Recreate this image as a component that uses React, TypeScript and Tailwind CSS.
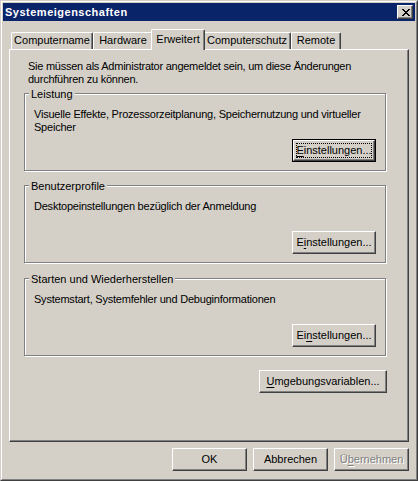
import type { ReactNode } from 'react'

const tabs = [
  { label: 'Computername', w: 'w-[82px]' },
  { label: 'Hardware', w: 'w-[60px]' },
  { label: 'Erweitert', w: 'w-[54px]', active: true },
  { label: 'Computerschutz', w: 'w-[88px]' },
  { label: 'Remote', w: 'w-[50px]' },
]

function Mn({ children }: { children: ReactNode }) {
  return <span className="underline underline-offset-[2px]">{children}</span>
}

function Button({
  children,
  className = 'w-[75px]',
  isDefault,
  disabled,
}: {
  children: ReactNode
  className?: string
  isDefault?: boolean
  disabled?: boolean
}) {
  if (isDefault) {
    return (
      <div className={`h-[23px] border border-black ${className}`}>
        <div className="relative flex h-full items-center justify-center border border-t-white border-l-white border-r-[#404040] border-b-[#404040] bg-[#D4D0C8] shadow-[inset_-1px_-1px_0_#808080]">
          <span className="absolute inset-[2px] border border-dotted border-black" />
          <span className="relative">{children}</span>
        </div>
      </div>
    )
  }
  return (
    <div
      className={`flex h-[23px] items-center justify-center border border-t-white border-l-white border-r-[#404040] border-b-[#404040] bg-[#D4D0C8] shadow-[inset_-1px_-1px_0_#808080] ${className} ${
        disabled ? 'text-[#808080] [text-shadow:1px_1px_0_#fff]' : ''
      }`}
    >
      {children}
    </div>
  )
}

function Group({
  label,
  className,
  children,
  button,
}: {
  label: string
  className: string
  children: ReactNode
  button: ReactNode
}) {
  return (
    <div
      className={`relative flex h-[78px] w-[362px] flex-col border border-[#808080] pt-[14px] pr-[9px] pb-[8px] pl-[9px] shadow-[inset_1px_1px_0_#fff,1px_1px_0_#fff] ${className}`}
    >
      <span className="absolute top-[-6px] left-[4px] bg-[#D4D0C8] px-[2px]">{label}</span>
      <div className="whitespace-nowrap tracking-[-0.22px]">{children}</div>
      <div className="mt-auto self-end">{button}</div>
    </div>
  )
}

function CloseGlyph() {
  const rows = ['11000011', '01100110', '00111100', '00011000', '00111100', '01100110', '11000011']
  return (
    <svg width="8" height="7" viewBox="0 0 8 7" shapeRendering="crispEdges">
      {rows.map((r, y) =>
        r.split('').map((c, x) => (c === '1' ? <rect key={`${x}-${y}`} x={x} y={y} width="1" height="1" fill="#000" /> : null))
      )}
    </svg>
  )
}

export default function App() {
  return (
    <div className="h-[481px] w-[418px] border border-t-[#D4D0C8] border-l-[#D4D0C8] border-r-[#404040] border-b-[#404040] bg-[#D4D0C8] font-['Liberation_Sans',Arial,sans-serif] text-[11px] leading-[13px] text-black">
      <div className="h-full border border-t-white border-l-white border-r-[#808080] border-b-[#808080] p-[1px]">
        {/* title bar */}
        <div className="flex h-[18px] items-center justify-between bg-[#0A246A] pl-[2px]">
          <span className="font-bold tracking-[0.5px] text-white">Systemeigenschaften</span>
          <div className="mr-[2px] flex h-[14px] w-[16px] items-center justify-center border border-t-white border-l-white border-r-[#404040] border-b-[#404040] bg-[#D4D0C8] pl-[1px] shadow-[inset_-1px_-1px_0_#808080]">
            <CloseGlyph />
          </div>
        </div>

        {/* tabs */}
        <div className="mt-[8px] flex h-[20px] items-end pl-[8px]">
          {tabs.map((t) =>
            t.active ? (
              <div
                key={t.label}
                className={`relative z-10 -mx-[2px] -mb-[1px] h-[21px] rounded-t-[2px] border-t border-l border-r border-t-white border-l-white border-r-[#404040] bg-[#D4D0C8] pt-[3px] text-center shadow-[inset_-1px_0_0_#808080] ${t.w}`}
              >
                {t.label}
              </div>
            ) : (
              <div
                key={t.label}
                className={`h-[17px] rounded-t-[2px] border-t border-l border-r border-t-white border-l-white border-r-[#404040] pt-[1px] text-center shadow-[inset_-1px_0_0_#808080] ${t.w}`}
              >
                {t.label}
              </div>
            )
          )}
        </div>

        {/* panel */}
        <div className="ml-[6px] h-[393px] w-[400px] border border-t-white border-l-white border-r-[#404040] border-b-[#404040] pt-[10px] pl-[14px] shadow-[inset_-1px_-1px_0_#808080]">
          <p className="pl-[4px] whitespace-nowrap tracking-[-0.25px]">
            Sie müssen als Administrator angemeldet sein, um diese Änderungen
            <br />
            durchführen zu können.
          </p>

          <Group
            label="Leistung"
            className="mt-[7px]"
            button={
              <Button isDefault className="w-[84px]">
                <Mn>E</Mn>instellungen...
              </Button>
            }
          >
            Visuelle Effekte, Prozessorzeitplanung, Speichernutzung und virtueller
            <br />
            Speicher
          </Group>

          <Group
            label="Benutzerprofile"
            className="mt-[14px]"
            button={
              <Button className="w-[84px]">
                E<Mn>i</Mn>nstellungen...
              </Button>
            }
          >
            Desktopeinstellungen bezüglich der Anmeldung
          </Group>

          <Group
            label="Starten und Wiederherstellen"
            className="mt-[15px]"
            button={
              <Button className="w-[84px]">
                Ei<Mn>n</Mn>stellungen...
              </Button>
            }
          >
            Systemstart, Systemfehler und Debuginformationen
          </Group>

          <div className="mt-[14px] flex w-[363px] justify-end">
            <Button className="w-[128px]">
              <Mn>U</Mn>mgebungsvariablen...
            </Button>
          </div>
        </div>

        {/* dialog buttons */}
        <div className="mt-[6px] mr-[6px] flex justify-end gap-[6px]">
          <Button>OK</Button>
          <Button>Abbrechen</Button>
          <Button disabled>
            Ü<Mn>b</Mn>ernehmen
          </Button>
        </div>
      </div>
    </div>
  )
}
